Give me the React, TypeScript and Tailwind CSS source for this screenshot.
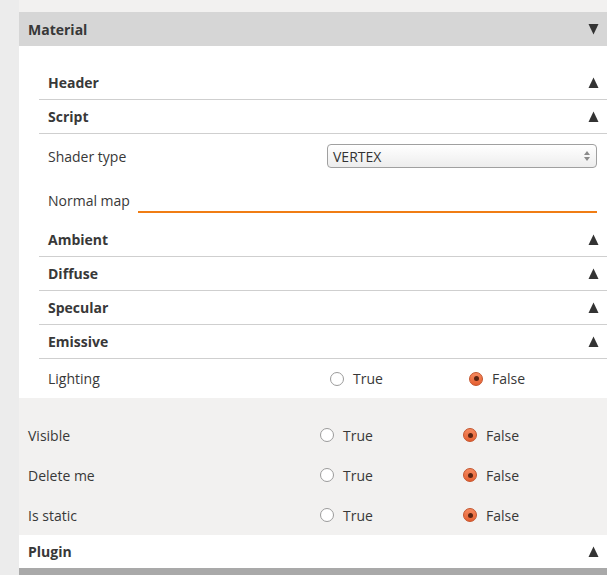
const font = { fontFamily: '"Open Sans", "Noto Sans", sans-serif' };

const Tri = ({ down = false }: { down?: boolean }) => (
  <svg width="11" height="12" viewBox="0 0 11 12" className="shrink-0">
    {down ? (
      <path d="M0.5 1 L10.5 1 L5.5 11.5 Z" fill="#333333" />
    ) : (
      <path d="M5.5 0.5 L10.5 11 L0.5 11 Z" fill="#333333" />
    )}
  </svg>
);

const Radio = ({ checked }: { checked?: boolean }) =>
  checked ? (
    <span className="flex h-[14px] w-[14px] items-center justify-center rounded-full border border-[#c4532b] bg-gradient-to-b from-[#f58a5f] to-[#e55f30]">
      <span className="h-[5px] w-[5px] rounded-full bg-[#5a2412]" />
    </span>
  ) : (
    <span className="h-[14px] w-[14px] rounded-full border border-[#9b9b9b] bg-white" />
  );

const Choice = ({ trueX }: { trueX: string }) => (
  <>
    <div className={`flex items-center gap-[9px] ${trueX}`}>
      <Radio />
      <span>True</span>
    </div>
    <div className="flex items-center gap-[9px]">
      <Radio checked />
      <span>False</span>
    </div>
  </>
);

const SubHeader = ({ title }: { title: string }) => (
  <div className="flex h-[34px] items-center justify-between border-b border-[#cfcfcf] pl-[9px] pr-[8px] font-bold">
    <span>{title}</span>
    <Tri />
  </div>
);

export default function App() {
  return (
    <div className="flex h-[575px] overflow-hidden bg-[#f2f1f0] text-[14px] text-[#383838]" style={font}>
      <div className="w-[19px] shrink-0 bg-[#ececec]" />
      <div className="flex flex-1 flex-col pt-[12px]">
        <div className="flex h-[34px] items-center justify-between bg-[#d6d6d6] pl-[9px] pr-[8px] font-bold">
          <span>Material</span>
          <Tri down />
        </div>

        <div className="bg-white pl-[20px] pt-[20px]">
          <SubHeader title="Header" />
          <SubHeader title="Script" />
          <div className="flex h-[44px] items-center pl-[9px] pr-[10px]">
            <span className="w-[279px]">Shader type</span>
            <div className="flex h-[24px] flex-1 items-center justify-between rounded-[4px] border border-[#a0a0a0] bg-gradient-to-b from-white to-[#ededed] pl-[5px] pr-[6px] shadow-[inset_0_1px_0_#fff]">
              <span className="text-[#333]">VERTEX</span>
              <span className="flex flex-col items-center gap-[2px]">
                <svg width="6" height="4" viewBox="0 0 6 4"><path d="M3 0 L6 4 L0 4 Z" fill="#8a8a8a" /></svg>
                <svg width="6" height="4" viewBox="0 0 6 4"><path d="M0 0 L6 0 L3 4 Z" fill="#8a8a8a" /></svg>
              </span>
            </div>
          </div>
          <div className="flex h-[45px] items-center pl-[9px] pr-[10px]">
            <span className="w-[90px]">Normal map</span>
            <div className="mt-[22px] h-[2px] flex-1 bg-[#f07d14]" />
          </div>
          <SubHeader title="Ambient" />
          <SubHeader title="Diffuse" />
          <SubHeader title="Specular" />
          <SubHeader title="Emissive" />
          <div className="flex h-[39px] items-center pl-[9px]">
            <span className="w-[282px]">Lighting</span>
            <Choice trueX="w-[139px]" />
          </div>
        </div>

        <div className="pl-[9px] pt-[17px]">
          {["Visible", "Delete me", "Is static"].map((label) => (
            <div key={label} className="flex h-[40px] items-center">
              <span className="w-[292px]">{label}</span>
              <Choice trueX="w-[143px]" />
            </div>
          ))}
        </div>

        <div className="flex h-[33px] items-center justify-between bg-white pl-[9px] pr-[8px] font-bold">
          <span>Plugin</span>
          <Tri />
        </div>
        <div className="flex-1 bg-[#a9a9a9]" />
      </div>
    </div>
  );
}
